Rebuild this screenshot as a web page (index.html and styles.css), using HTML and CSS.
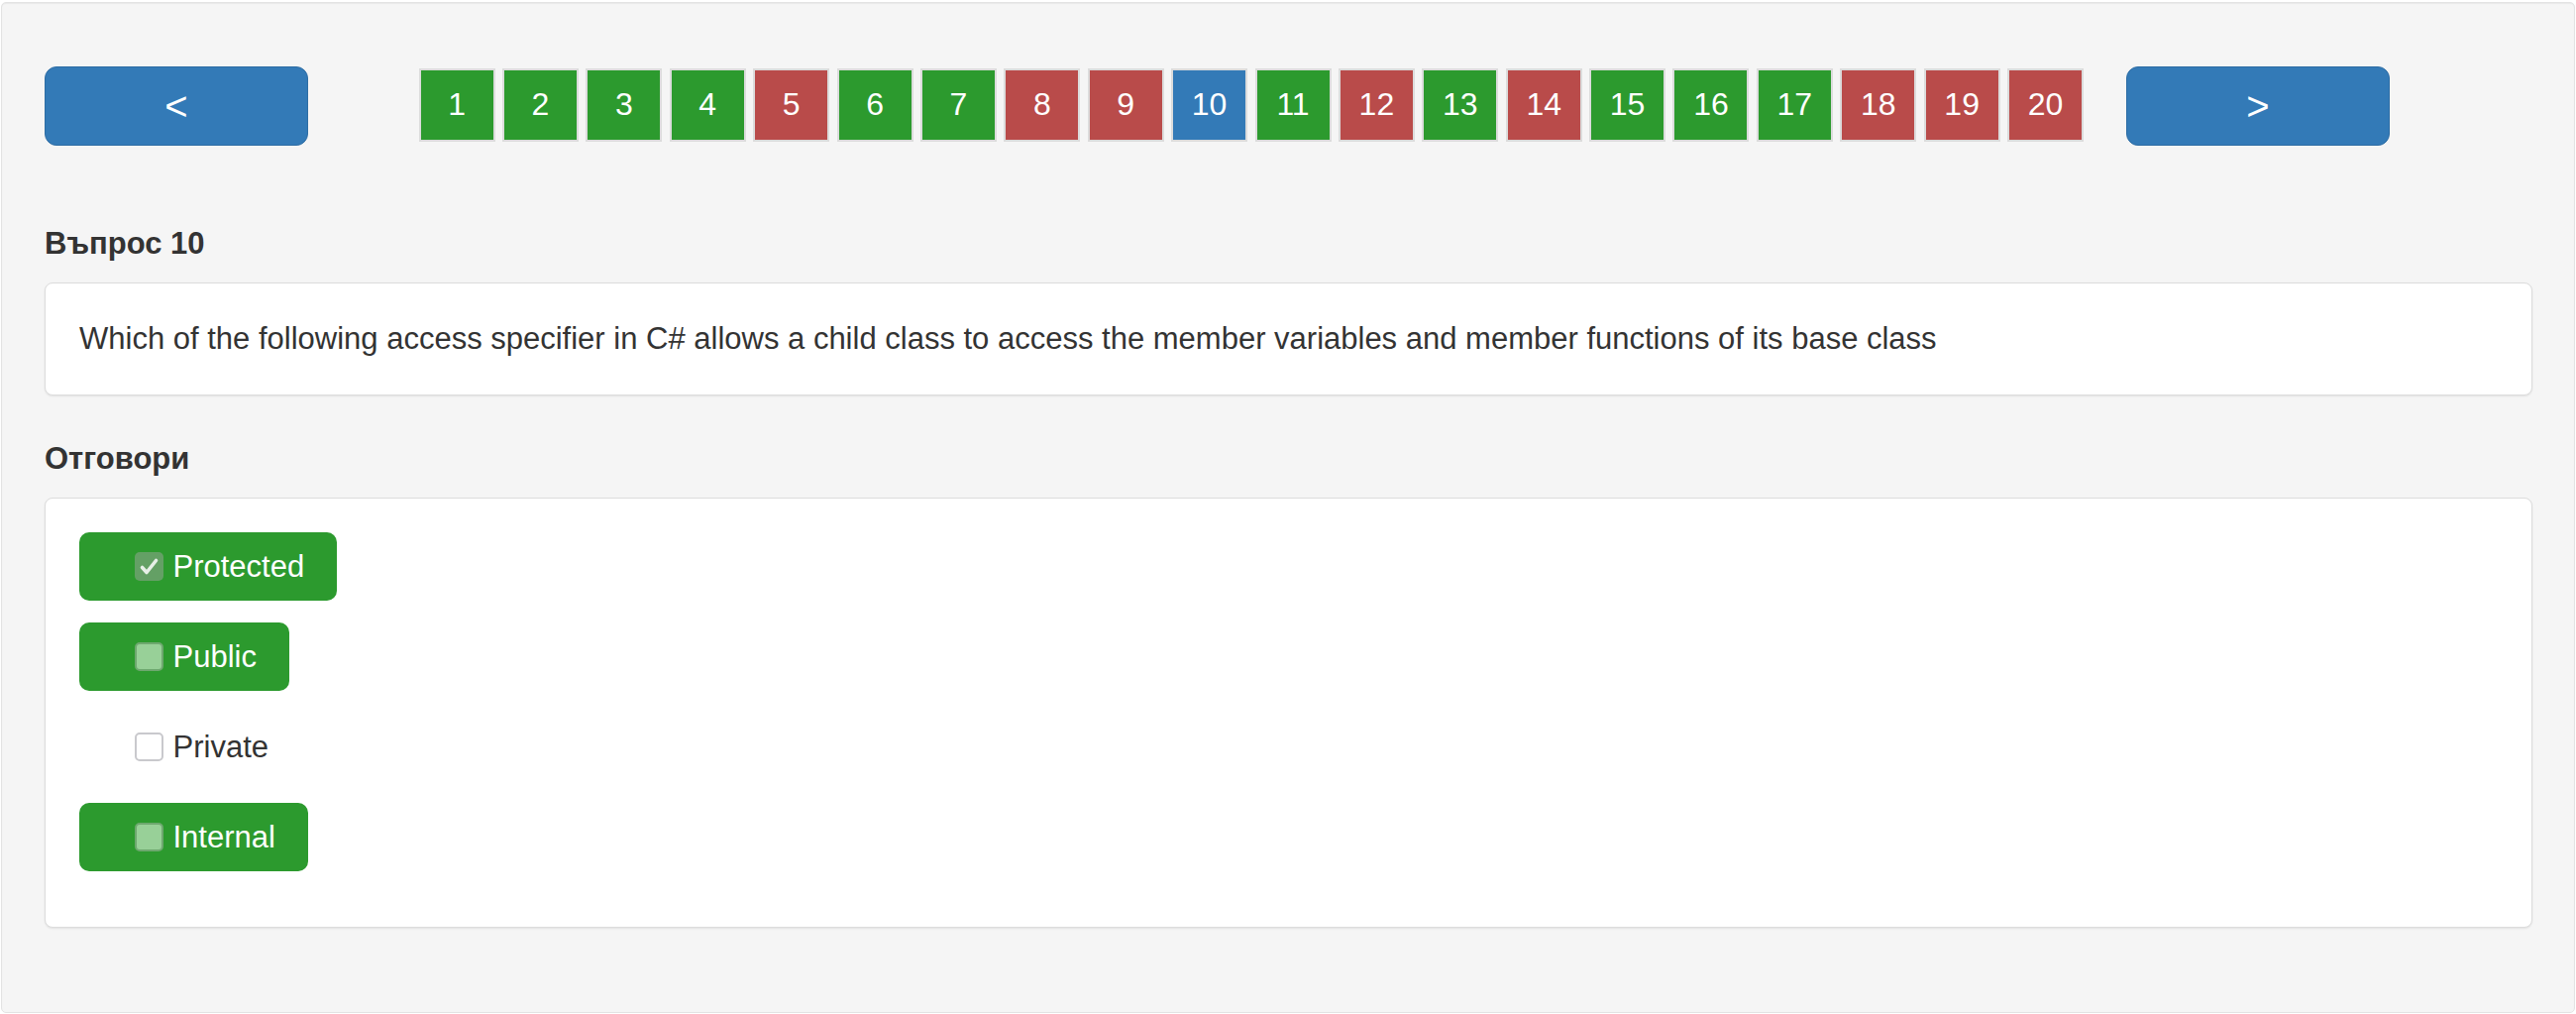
FILE: index.html
```html
<!DOCTYPE html>
<html lang="bg">
<head>
<meta charset="utf-8">
<title>Въпрос 10</title>
<link rel="stylesheet" href="styles.css">
</head>
<body>
<div class="well">
  <div class="nav-row">
    <button class="nav-btn">&lt;</button>
    <div class="pager">
      <span class="sq ok">1</span>
      <span class="sq ok">2</span>
      <span class="sq ok">3</span>
      <span class="sq ok">4</span>
      <span class="sq bad">5</span>
      <span class="sq ok">6</span>
      <span class="sq ok">7</span>
      <span class="sq bad">8</span>
      <span class="sq bad">9</span>
      <span class="sq cur">10</span>
      <span class="sq ok">11</span>
      <span class="sq bad">12</span>
      <span class="sq ok">13</span>
      <span class="sq bad">14</span>
      <span class="sq ok">15</span>
      <span class="sq ok">16</span>
      <span class="sq ok">17</span>
      <span class="sq bad">18</span>
      <span class="sq bad">19</span>
      <span class="sq bad">20</span>
    </div>
    <button class="nav-btn next">&gt;</button>
  </div>

  <div class="label first">Въпрос 10</div>
  <div class="panel question">Which of the following access specifier in C# allows a child class to access the member variables and member functions of its base class</div>

  <div class="label">Отговори</div>
  <div class="panel answers">
    <div class="row"><span class="answer green"><span class="cb checked"><svg viewBox="0 0 29 29" width="29" height="29"><path d="M7.5 15.5 L12 20.5 L21.5 8.5" fill="none" stroke="#e7efe7" stroke-width="3.6" stroke-linecap="round" stroke-linejoin="round"/></svg></span><span class="txt">Protected</span></span></div>
    <div class="row"><span class="answer green"><span class="cb dim"></span><span class="txt">Public</span></span></div>
    <div class="row"><span class="answer plain"><span class="cb empty"></span><span class="txt">Private</span></span></div>
    <div class="row"><span class="answer green"><span class="cb dim"></span><span class="txt">Internal</span></span></div>
  </div>
</div>
</body>
</html>
```

FILE: styles.css
```css
html, body {
  margin: 0;
  padding: 0;
  background: #ffffff;
}

body {
  font-family: "Liberation Sans", Arial, sans-serif;
  color: #333333;
  font-size: 31px;
}

.well {
  box-sizing: border-box;
  margin: 2px 1px 0 1px;
  height: 1020px;
  padding: 64px 42px 0 43px;
  background: #f5f5f5;
  border: 1px solid #e3e3e3;
  border-radius: 5px;
  box-shadow: inset 0 1px 1px rgba(0, 0, 0, 0.05);
}

.nav-row {
  display: flex;
  align-items: center;
  height: 80px;
}

.nav-btn {
  box-sizing: border-box;
  width: 266px;
  height: 80px;
  padding: 0;
  background: #337ab7;
  border: 1px solid #2e6da4;
  border-radius: 12px;
  color: #ffffff;
  font-family: "Liberation Sans", Arial, sans-serif;
  font-size: 40px;
  line-height: 1;
}

.pager {
  display: flex;
  gap: 7.4px;
  margin-left: 111.6px;
  margin-top: -3px;
}

.nav-btn.next {
  margin-left: 43px;
}

.sq {
  box-sizing: border-box;
  width: 77px;
  height: 74px;
  border: 2px solid #dcdcdc;
  display: flex;
  align-items: center;
  justify-content: center;
  color: #ffffff;
  font-size: 32px;
}

.sq.ok { background: #2c9a2e; }
.sq.bad { background: #b94b4a; }
.sq.cur { background: #337ab7; }

.label {
  font-weight: bold;
  font-size: 31px;
  line-height: 36px;
  margin-top: 46px;
}

.label.first {
  margin-top: 81px;
}

.panel {
  background: #ffffff;
  border: 1px solid #dcdcdc;
  border-radius: 8px;
  box-shadow: 0 1px 2px rgba(0, 0, 0, 0.08);
  margin-top: 21px;
}

.question {
  padding: 38px 34px 38px 34px;
  line-height: 36px;
}

.answers {
  padding: 34px 34px 34px 34px;
}

.row {
  margin-bottom: 22px;
  height: 69px;
}

.answer {
  box-sizing: border-box;
  display: inline-flex;
  align-items: center;
  height: 69px;
  padding: 0 33px 0 56px;
  border-radius: 10px;
}

.answer.green {
  background: #2c9a2e;
  color: #ffffff;
}

.answer.plain {
  color: #333333;
}

.cb {
  box-sizing: border-box;
  width: 29px;
  height: 29px;
  border-radius: 5px;
  margin-right: 9.5px;
  flex: none;
  display: block;
}

.cb svg {
  display: block;
}

.cb.checked {
  background: #64a065;
}

.cb.dim {
  background: #98d098;
  border: 2px solid #6ea86f;
}

.cb.empty {
  background: #ffffff;
  border: 2px solid #c9c9cd;
}

.txt {
  line-height: 36px;
}
```
